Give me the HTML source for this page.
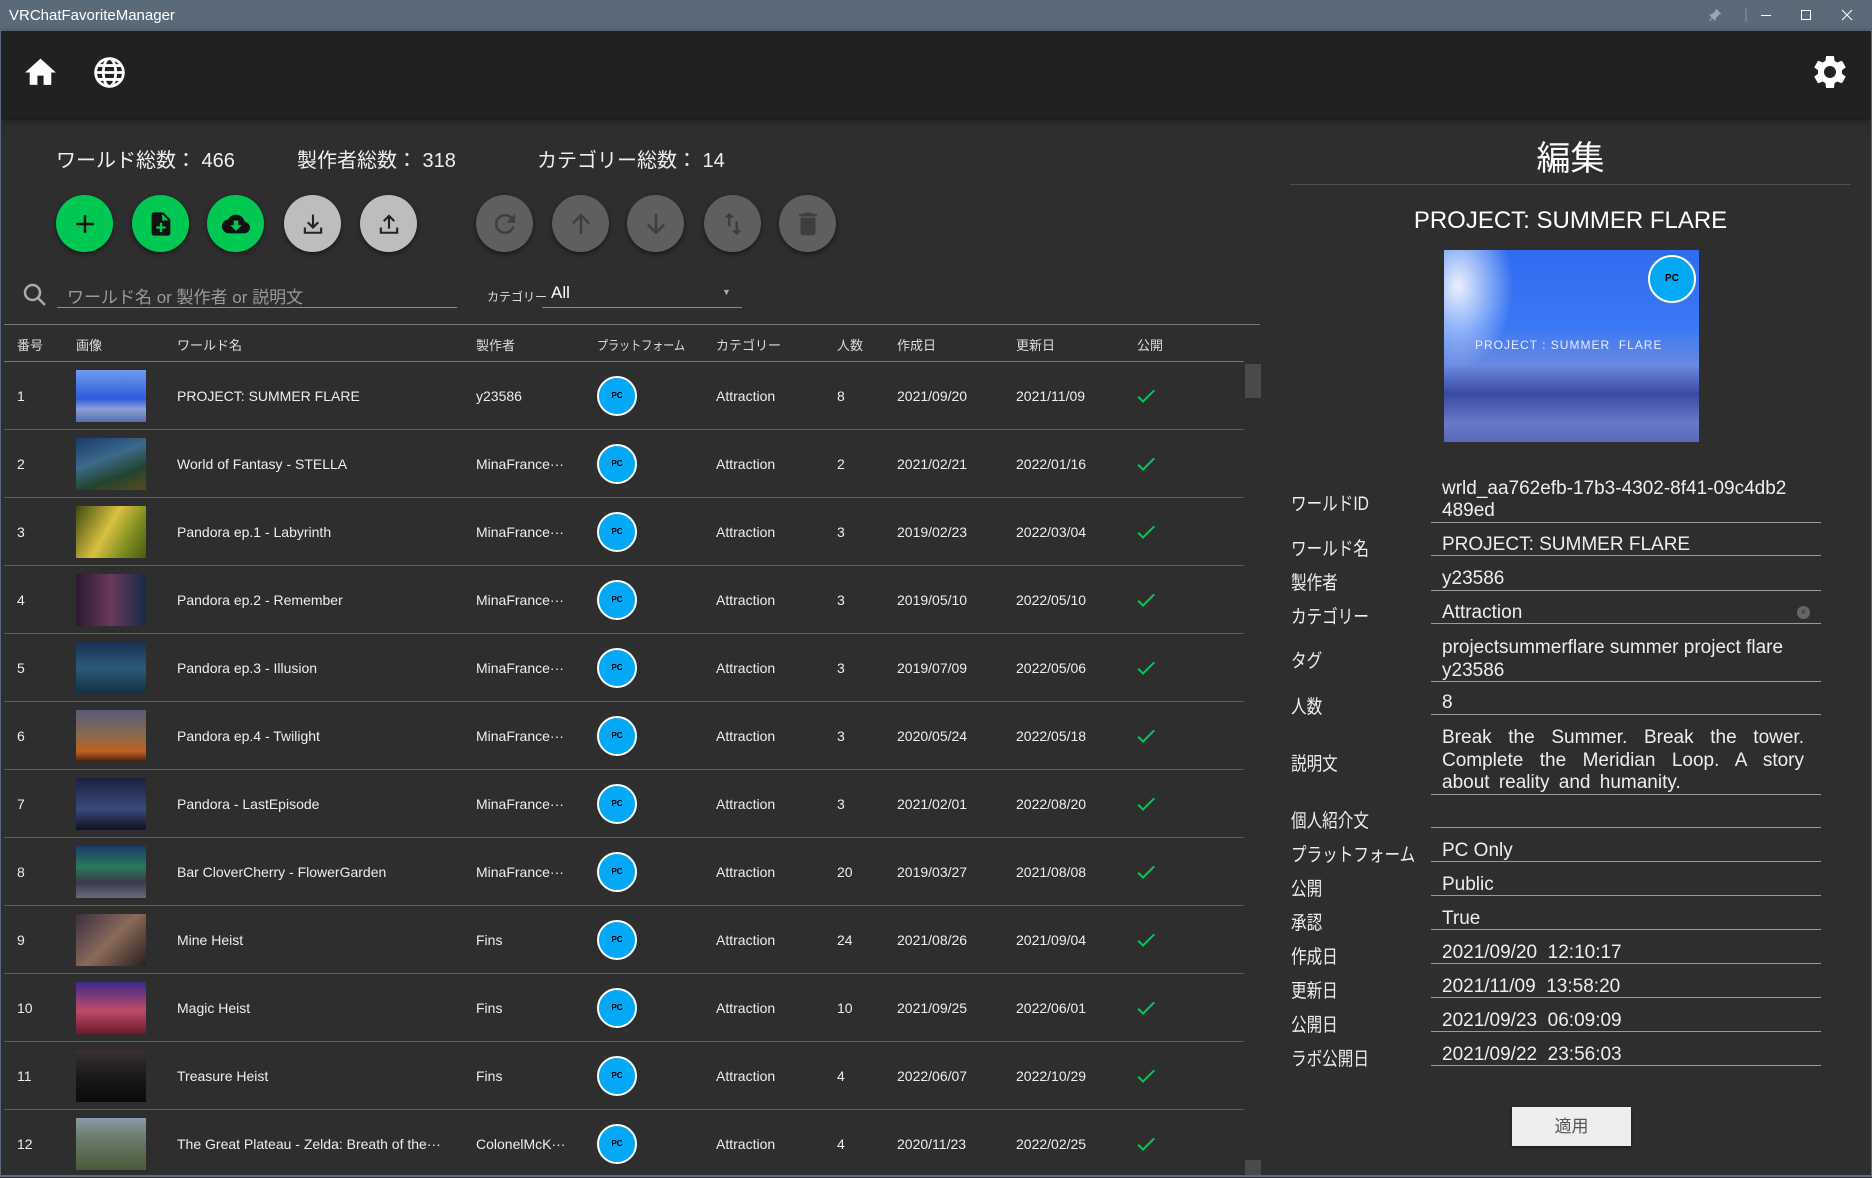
<!DOCTYPE html>
<html><head><meta charset="utf-8">
<style>
*{margin:0;padding:0;box-sizing:border-box}
body{width:1872px;height:1177px;overflow:hidden;background:#2e2e2e;font-family:"Liberation Sans","Noto Sans CJK JP",sans-serif;color:#eee;position:relative}
.a{position:absolute}
.title{left:0;top:0;width:1872px;height:31px;background:#5b6a79;color:#fff;font-size:15px;line-height:31px;padding-left:9px}
.head{left:1px;top:31px;width:1870px;height:86px;background:#212121;box-shadow:0 3px 8px rgba(0,0,0,.5)}
.btn{width:57px;height:57px;border-radius:50%;top:195px;display:flex;align-items:center;justify-content:center;box-shadow:0 2px 5px rgba(0,0,0,.5)}
.g{background:#00c853}.l{background:#bdbdbd}.d{background:#5f5f5f}
.stat{top:144px;font-size:20px}
.hd{top:335px;font-size:13px;color:#ddd}
.row{left:4px;width:1240px;height:68px;border-bottom:1px solid #5c5c5c}
.c{position:absolute;top:0;line-height:68px;font-size:14px;color:#eee;white-space:nowrap}
.th{position:absolute;left:72px;top:8px;width:70px;height:52px}
.pc{position:absolute;left:593px;top:14px;width:40px;height:40px;border-radius:50%;background:#03a9f4;border:2px solid #fff;font-size:8px;color:#000;font-weight:bold;text-align:center;line-height:36px}
.ck{position:absolute;left:1130px;top:22px}
.lb{left:1291px;font-size:19px;color:#eee;transform:scaleX(.82);transform-origin:left;white-space:nowrap}
.vl{left:1442px;font-size:19px;color:#eee;width:370px}
.ul{left:1431px;width:390px;height:1px;background:#9a9a9a}
</style></head><body>
<div class="a title">VRChatFavoriteManager</div>
<svg class="a" style="left:1706px;top:8px" width="16" height="16" viewBox="0 0 24 24"><path fill="#9aa5b1" d="M16 12V4h1V2H7v2h1v8l-2 2v2h5.2v6h1.6v-6H18v-2l-2-2z" transform="rotate(45 12 12)"/></svg>
<div class="a" style="left:1720px;top:0;width:152px;height:31px">
<svg width="152" height="31"><line x1="26" y1="8" x2="26" y2="22" stroke="#8b97a3"/><line x1="41" y1="15.5" x2="51" y2="15.5" stroke="#fff"/><rect x="81.5" y="10.5" width="9" height="9" fill="none" stroke="#fff"/><path d="M122 10l10 10M132 10l-10 10" stroke="#fff"/></svg></div>
<div class="a head"></div>
<svg class="a" style="left:22px;top:54px" width="37" height="37" viewBox="0 0 24 24"><path fill="#fff" d="M10 20v-6h4v6h5v-8h3L12 3 2 12h3v8z"/></svg>
<svg class="a" style="left:91px;top:54px" width="37" height="37" viewBox="0 0 24 24" fill="none" stroke="#fff" stroke-width="1.8"><circle cx="12" cy="12" r="9"/><ellipse cx="12" cy="12" rx="4" ry="9"/><path d="M3 12h18M4.5 7.5h15M4.5 16.5h15"/></svg>
<svg class="a" style="left:1810px;top:52px" width="40" height="40" viewBox="0 0 24 24"><path fill="#fff" d="M19.14 12.94c.04-.3.06-.61.06-.94 0-.32-.02-.64-.07-.94l2.03-1.58c.18-.14.23-.41.12-.61l-1.92-3.32c-.12-.22-.37-.29-.59-.22l-2.39.96c-.5-.38-1.03-.7-1.62-.94l-.36-2.54c-.04-.24-.24-.41-.48-.41h-3.84c-.24 0-.43.17-.47.41l-.36 2.54c-.59.24-1.13.57-1.62.94l-2.39-.96c-.22-.08-.47 0-.59.22L2.74 8.87c-.12.21-.08.47.12.61l2.03 1.58c-.05.3-.09.63-.09.94s.02.64.07.94l-2.03 1.58c-.18.14-.23.41-.12.61l1.92 3.32c.12.22.37.29.59.22l2.39-.96c.5.38 1.03.7 1.62.94l.36 2.54c.05.24.24.41.48.41h3.84c.24 0 .44-.17.47-.41l.36-2.54c.59-.24 1.13-.56 1.62-.94l2.39.96c.22.08.47 0 .59-.22l1.92-3.32c.12-.22.07-.47-.12-.61l-2.01-1.58zM12 15.6c-1.98 0-3.6-1.62-3.6-3.6s1.62-3.6 3.6-3.6 3.6 1.62 3.6 3.6-1.62 3.6-3.6 3.6z"/></svg>

<div class="a stat" style="left:56px">ワールド総数： 466</div>
<div class="a stat" style="left:297px">製作者総数： 318</div>
<div class="a stat" style="left:537px">カテゴリー総数： 14</div>

<div class="a btn g" style="left:56px"><svg width="30" height="30" viewBox="0 0 24 24"><path fill="#111" d="M19 13h-6v6h-2v-6H5v-2h6V5h2v6h6v2z"/></svg></div>
<div class="a btn g" style="left:132px"><svg width="28" height="28" viewBox="0 0 24 24"><path fill="#111" d="M14 2H6c-1.1 0-2 .9-2 2v16c0 1.1.89 2 1.99 2H18c1.1 0 2-.9 2-2V8l-6-6zm2 14h-3v3h-2v-3H8v-2h3v-3h2v3h3v2zm-3-7V3.5L18.5 9H13z"/></svg></div>
<div class="a btn g" style="left:207px"><svg width="28" height="28" viewBox="0 0 24 24"><path fill="#111" d="M19.35 10.04C18.67 6.59 15.64 4 12 4 9.11 4 6.6 5.64 5.35 8.04 2.34 8.36 0 10.91 0 14c0 3.31 2.69 6 6 6h13c2.76 0 5-2.24 5-5 0-2.64-2.05-4.78-4.65-4.96zM17 13l-5 5-5-5h3V9h4v4h3z"/></svg></div>
<div class="a btn l" style="left:284px"><svg width="28" height="28" viewBox="0 0 24 24" fill="none" stroke="#222" stroke-width="1.8"><path d="M12 4v11M7.5 10.5L12 15l4.5-4.5M5 15v4.5h14V15"/></svg></div>
<div class="a btn l" style="left:360px"><svg width="28" height="28" viewBox="0 0 24 24" fill="none" stroke="#222" stroke-width="1.8"><path d="M12 16V5M7.5 9.5L12 5l4.5 4.5M5 15v4.5h14V15"/></svg></div>
<div class="a btn d" style="left:476px"><svg width="30" height="30" viewBox="0 0 24 24"><path fill="#3e3e3e" d="M17.65 6.35C16.2 4.9 14.21 4 12 4c-4.42 0-7.99 3.58-7.99 8s3.57 8 7.99 8c3.73 0 6.84-2.55 7.73-6h-2.08c-.82 2.33-3.04 4-5.65 4-3.31 0-6-2.69-6-6s2.69-6 6-6c1.66 0 3.14.69 4.22 1.78L13 11h7V4l-2.35 2.35z"/></svg></div>
<div class="a btn d" style="left:552px"><svg width="30" height="30" viewBox="0 0 24 24" fill="none" stroke="#3e3e3e" stroke-width="2"><path d="M12 20V5M5.5 11.5L12 5l6.5 6.5"/></svg></div>
<div class="a btn d" style="left:627px"><svg width="30" height="30" viewBox="0 0 24 24" fill="none" stroke="#3e3e3e" stroke-width="2"><path d="M12 4v15M5.5 12.5L12 19l6.5-6.5"/></svg></div>
<div class="a btn d" style="left:704px"><svg width="30" height="30" viewBox="0 0 24 24"><path fill="#3e3e3e" d="M16 17.01V10h-2v7.01h-3L15 21l4-3.99h-3zM9 3L5 6.99h3V14h2V6.99h3L9 3z"/></svg></div>
<div class="a btn d" style="left:779px"><svg width="30" height="30" viewBox="0 0 24 24"><path fill="#3e3e3e" d="M6 19c0 1.1.9 2 2 2h8c1.1 0 2-.9 2-2V7H6v12zM19 4h-3.5l-1-1h-5l-1 1H5v2h14V4z"/></svg></div>

<svg class="a" style="left:20px;top:280px" width="30" height="30" viewBox="0 0 24 24" fill="none" stroke="#aaa" stroke-width="2"><circle cx="10" cy="10" r="6"/><path d="M14.5 14.5L20 20"/></svg>
<div class="a" style="left:67px;top:283px;font-size:17px;color:#9a9a9a">ワールド名 or 製作者 or 説明文</div>
<div class="a" style="left:57px;top:307px;width:400px;height:1px;background:#8a8a8a"></div>
<div class="a" style="left:487px;top:288px;font-size:12px;color:#ddd">カテゴリー</div>
<div class="a" style="left:551px;top:283px;font-size:17px;color:#fff">All</div>
<div class="a" style="left:722px;top:287px;font-size:9px;color:#aaa">▼</div>
<div class="a" style="left:542px;top:307px;width:200px;height:1px;background:#8a8a8a"></div>

<div class="a" style="left:4px;top:324px;width:1256px;height:1px;background:#777"></div>
<div class="a hd" style="left:17px">番号</div><div class="a hd" style="left:76px">画像</div><div class="a hd" style="left:177px">ワールド名</div><div class="a hd" style="left:476px">製作者</div><div class="a hd" style="left:597px;transform:scaleX(.85);transform-origin:left">プラットフォーム</div><div class="a hd" style="left:716px">カテゴリー</div><div class="a hd" style="left:837px">人数</div><div class="a hd" style="left:897px">作成日</div><div class="a hd" style="left:1016px">更新日</div><div class="a hd" style="left:1137px">公開</div>
<div class="a" style="left:4px;top:361px;width:1240px;height:1px;background:#777"></div>

<div class="a" style="left:0;top:362px">
<div class="row a" style="top:0"><div class="c" style="left:13px">1</div><div class="th" style="background:linear-gradient(180deg,#6f9cf0,#2e5bd8 55%,#8aa0d8 75%,#5a6ab0)"></div><div class="c" style="left:173px">PROJECT: SUMMER FLARE</div><div class="c" style="left:472px">y23586</div><div class="pc">PC</div><div class="c" style="left:712px">Attraction</div><div class="c" style="left:833px">8</div><div class="c" style="left:893px">2021/09/20</div><div class="c" style="left:1012px">2021/11/09</div><svg class="ck" width="24" height="24" viewBox="0 0 24 24"><path fill="#00c853" d="M9 16.17L4.83 12l-1.42 1.41L9 19 21 7l-1.41-1.41z"/></svg></div>
<div class="row a" style="top:68px"><div class="c" style="left:13px">2</div><div class="th" style="background:linear-gradient(160deg,#1b3a6b,#3b6a8a 40%,#24432e 70%,#5a4a20)"></div><div class="c" style="left:173px">World of Fantasy - STELLA</div><div class="c" style="left:472px">MinaFrance···</div><div class="pc">PC</div><div class="c" style="left:712px">Attraction</div><div class="c" style="left:833px">2</div><div class="c" style="left:893px">2021/02/21</div><div class="c" style="left:1012px">2022/01/16</div><svg class="ck" width="24" height="24" viewBox="0 0 24 24"><path fill="#00c853" d="M9 16.17L4.83 12l-1.42 1.41L9 19 21 7l-1.41-1.41z"/></svg></div>
<div class="row a" style="top:136px"><div class="c" style="left:13px">3</div><div class="th" style="background:linear-gradient(120deg,#3e4a12,#d9c040 45%,#7a8a20 75%,#4a5a10)"></div><div class="c" style="left:173px">Pandora ep.1 - Labyrinth</div><div class="c" style="left:472px">MinaFrance···</div><div class="pc">PC</div><div class="c" style="left:712px">Attraction</div><div class="c" style="left:833px">3</div><div class="c" style="left:893px">2019/02/23</div><div class="c" style="left:1012px">2022/03/04</div><svg class="ck" width="24" height="24" viewBox="0 0 24 24"><path fill="#00c853" d="M9 16.17L4.83 12l-1.42 1.41L9 19 21 7l-1.41-1.41z"/></svg></div>
<div class="row a" style="top:204px"><div class="c" style="left:13px">4</div><div class="th" style="background:linear-gradient(90deg,#2a1a30,#6a3a5a 50%,#1a2a4a)"></div><div class="c" style="left:173px">Pandora ep.2 - Remember</div><div class="c" style="left:472px">MinaFrance···</div><div class="pc">PC</div><div class="c" style="left:712px">Attraction</div><div class="c" style="left:833px">3</div><div class="c" style="left:893px">2019/05/10</div><div class="c" style="left:1012px">2022/05/10</div><svg class="ck" width="24" height="24" viewBox="0 0 24 24"><path fill="#00c853" d="M9 16.17L4.83 12l-1.42 1.41L9 19 21 7l-1.41-1.41z"/></svg></div>
<div class="row a" style="top:272px"><div class="c" style="left:13px">5</div><div class="th" style="background:linear-gradient(180deg,#1a3050,#2a5a7a 50%,#123040)"></div><div class="c" style="left:173px">Pandora ep.3 - Illusion</div><div class="c" style="left:472px">MinaFrance···</div><div class="pc">PC</div><div class="c" style="left:712px">Attraction</div><div class="c" style="left:833px">3</div><div class="c" style="left:893px">2019/07/09</div><div class="c" style="left:1012px">2022/05/06</div><svg class="ck" width="24" height="24" viewBox="0 0 24 24"><path fill="#00c853" d="M9 16.17L4.83 12l-1.42 1.41L9 19 21 7l-1.41-1.41z"/></svg></div>
<div class="row a" style="top:340px"><div class="c" style="left:13px">6</div><div class="th" style="background:linear-gradient(180deg,#5a5a7a,#8a6a4a 50%,#c06020 80%,#402010)"></div><div class="c" style="left:173px">Pandora ep.4 - Twilight</div><div class="c" style="left:472px">MinaFrance···</div><div class="pc">PC</div><div class="c" style="left:712px">Attraction</div><div class="c" style="left:833px">3</div><div class="c" style="left:893px">2020/05/24</div><div class="c" style="left:1012px">2022/05/18</div><svg class="ck" width="24" height="24" viewBox="0 0 24 24"><path fill="#00c853" d="M9 16.17L4.83 12l-1.42 1.41L9 19 21 7l-1.41-1.41z"/></svg></div>
<div class="row a" style="top:408px"><div class="c" style="left:13px">7</div><div class="th" style="background:linear-gradient(180deg,#1a2040,#3a4a7a 60%,#101020)"></div><div class="c" style="left:173px">Pandora - LastEpisode</div><div class="c" style="left:472px">MinaFrance···</div><div class="pc">PC</div><div class="c" style="left:712px">Attraction</div><div class="c" style="left:833px">3</div><div class="c" style="left:893px">2021/02/01</div><div class="c" style="left:1012px">2022/08/20</div><svg class="ck" width="24" height="24" viewBox="0 0 24 24"><path fill="#00c853" d="M9 16.17L4.83 12l-1.42 1.41L9 19 21 7l-1.41-1.41z"/></svg></div>
<div class="row a" style="top:476px"><div class="c" style="left:13px">8</div><div class="th" style="background:linear-gradient(180deg,#1a3a6a,#2a7a5a 40%,#3a3a4a 70%,#6a6a7a)"></div><div class="c" style="left:173px">Bar CloverCherry - FlowerGarden</div><div class="c" style="left:472px">MinaFrance···</div><div class="pc">PC</div><div class="c" style="left:712px">Attraction</div><div class="c" style="left:833px">20</div><div class="c" style="left:893px">2019/03/27</div><div class="c" style="left:1012px">2021/08/08</div><svg class="ck" width="24" height="24" viewBox="0 0 24 24"><path fill="#00c853" d="M9 16.17L4.83 12l-1.42 1.41L9 19 21 7l-1.41-1.41z"/></svg></div>
<div class="row a" style="top:544px"><div class="c" style="left:13px">9</div><div class="th" style="background:linear-gradient(135deg,#3a3040,#8a6a5a 50%,#2a2020)"></div><div class="c" style="left:173px">Mine Heist</div><div class="c" style="left:472px">Fins</div><div class="pc">PC</div><div class="c" style="left:712px">Attraction</div><div class="c" style="left:833px">24</div><div class="c" style="left:893px">2021/08/26</div><div class="c" style="left:1012px">2021/09/04</div><svg class="ck" width="24" height="24" viewBox="0 0 24 24"><path fill="#00c853" d="M9 16.17L4.83 12l-1.42 1.41L9 19 21 7l-1.41-1.41z"/></svg></div>
<div class="row a" style="top:612px"><div class="c" style="left:13px">10</div><div class="th" style="background:linear-gradient(180deg,#3a2a8a,#c04a6a 55%,#6a1a2a)"></div><div class="c" style="left:173px">Magic Heist</div><div class="c" style="left:472px">Fins</div><div class="pc">PC</div><div class="c" style="left:712px">Attraction</div><div class="c" style="left:833px">10</div><div class="c" style="left:893px">2021/09/25</div><div class="c" style="left:1012px">2022/06/01</div><svg class="ck" width="24" height="24" viewBox="0 0 24 24"><path fill="#00c853" d="M9 16.17L4.83 12l-1.42 1.41L9 19 21 7l-1.41-1.41z"/></svg></div>
<div class="row a" style="top:680px"><div class="c" style="left:13px">11</div><div class="th" style="background:linear-gradient(180deg,#3a3030,#1a1a1a 50%,#0a0a0a)"></div><div class="c" style="left:173px">Treasure Heist</div><div class="c" style="left:472px">Fins</div><div class="pc">PC</div><div class="c" style="left:712px">Attraction</div><div class="c" style="left:833px">4</div><div class="c" style="left:893px">2022/06/07</div><div class="c" style="left:1012px">2022/10/29</div><svg class="ck" width="24" height="24" viewBox="0 0 24 24"><path fill="#00c853" d="M9 16.17L4.83 12l-1.42 1.41L9 19 21 7l-1.41-1.41z"/></svg></div>
<div class="row a" style="top:748px;border-bottom:none"><div class="c" style="left:13px">12</div><div class="th" style="background:linear-gradient(180deg,#8a9aa8,#6a7a6a 40%,#4a5a3a)"></div><div class="c" style="left:173px">The Great Plateau - Zelda: Breath of the···</div><div class="c" style="left:472px">ColonelMcK···</div><div class="pc">PC</div><div class="c" style="left:712px">Attraction</div><div class="c" style="left:833px">4</div><div class="c" style="left:893px">2020/11/23</div><div class="c" style="left:1012px">2022/02/25</div><svg class="ck" width="24" height="24" viewBox="0 0 24 24"><path fill="#00c853" d="M9 16.17L4.83 12l-1.42 1.41L9 19 21 7l-1.41-1.41z"/></svg></div>
</div>
<div class="a" style="left:1245px;top:364px;width:16px;height:34px;background:#4a4a4a"></div>
<div class="a" style="left:1245px;top:1160px;width:16px;height:17px;background:#4a4a4a"></div>

<div class="a" style="left:1290px;top:131px;width:561px;text-align:center;font-size:34px;color:#fff">編集</div>
<div class="a" style="left:1290px;top:184px;width:561px;height:1px;background:#4e4e4e"></div>
<div class="a" style="left:1290px;top:207px;width:561px;text-align:center;font-size:24px;color:#fff">PROJECT: SUMMER FLARE</div>
<div class="a" style="left:1444px;top:250px;width:255px;height:192px;background:linear-gradient(180deg,#2f6cf0 0%,#3a78f5 40%,#6a8ae0 60%,#3a4aa0 75%,#6a78c8 90%,#5a68b8)"></div>
<div class="a" style="left:1444px;top:250px;width:70px;height:120px;background:radial-gradient(ellipse at 20% 30%,rgba(255,255,255,.9),rgba(255,255,255,0) 70%)"></div>
<div class="a" style="left:1475px;top:338px;font-size:12px;color:#e8e8ff;letter-spacing:1px">PROJECT : SUMMER&nbsp; FLARE</div>
<div class="a" style="left:1648px;top:255px;width:48px;height:48px;border-radius:50%;background:#03a9f4;border:2px solid #fff;font-size:10px;font-weight:bold;color:#000;text-align:center;line-height:44px">PC</div>

<div class="a lb" style="top:489px">ワールドID</div><div class="a vl" style="top:478px;line-height:22px">wrld_aa762efb-17b3-4302-8f41-09c4db2<br>489ed</div><div class="a ul" style="top:522px"></div>
<div class="a lb" style="top:534px">ワールド名</div><div class="a vl" style="top:534px">PROJECT: SUMMER FLARE</div><div class="a ul" style="top:555px"></div>
<div class="a lb" style="top:568px">製作者</div><div class="a vl" style="top:568px">y23586</div><div class="a ul" style="top:590px"></div>
<div class="a lb" style="top:602px">カテゴリー</div><div class="a vl" style="top:602px">Attraction</div><div class="a" style="left:1797px;top:606px;width:13px;height:13px;border-radius:50%;background:#666;color:#333;font-size:10px;line-height:13px;text-align:center">×</div><div class="a ul" style="top:623px"></div>
<div class="a lb" style="top:646px">タグ</div><div class="a vl" style="top:636px;line-height:23px">projectsummerflare summer project flare y23586</div><div class="a ul" style="top:681px"></div>
<div class="a lb" style="top:692px">人数</div><div class="a vl" style="top:692px">8</div><div class="a ul" style="top:714px"></div>
<div class="a lb" style="top:749px">説明文</div><div class="a vl" style="top:727px;line-height:22.5px;text-align:justify;width:362px;word-spacing:4px">Break the Summer. Break the tower. Complete the Meridian Loop. A story about reality and humanity.</div><div class="a ul" style="top:794px"></div>
<div class="a lb" style="top:806px">個人紹介文</div><div class="a ul" style="top:827px"></div>
<div class="a lb" style="top:840px">プラットフォーム</div><div class="a vl" style="top:840px">PC Only</div><div class="a ul" style="top:861px"></div>
<div class="a lb" style="top:874px">公開</div><div class="a vl" style="top:874px">Public</div><div class="a ul" style="top:895px"></div>
<div class="a lb" style="top:908px">承認</div><div class="a vl" style="top:908px">True</div><div class="a ul" style="top:929px"></div>
<div class="a lb" style="top:942px">作成日</div><div class="a vl" style="top:942px">2021/09/20&nbsp; 12:10:17</div><div class="a ul" style="top:963px"></div>
<div class="a lb" style="top:976px">更新日</div><div class="a vl" style="top:976px">2021/11/09&nbsp; 13:58:20</div><div class="a ul" style="top:997px"></div>
<div class="a lb" style="top:1010px">公開日</div><div class="a vl" style="top:1010px">2021/09/23&nbsp; 06:09:09</div><div class="a ul" style="top:1031px"></div>
<div class="a lb" style="top:1044px">ラボ公開日</div><div class="a vl" style="top:1044px">2021/09/22&nbsp; 23:56:03</div><div class="a ul" style="top:1065px"></div>
<div class="a" style="left:1512px;top:1107px;width:119px;height:39px;background:#eeeeee;color:#555;font-size:17px;text-align:center;line-height:39px;box-shadow:0 1px 3px rgba(0,0,0,.5)">適用</div>
<div class="a" style="left:0;top:1175px;width:1872px;height:2px;background:#5b6a79"></div>
<div class="a" style="left:0;top:31px;width:1px;height:1146px;background:#5b6a79"></div>
<div class="a" style="left:1871px;top:31px;width:1px;height:1146px;background:#5b6a79"></div>
</body></html>
